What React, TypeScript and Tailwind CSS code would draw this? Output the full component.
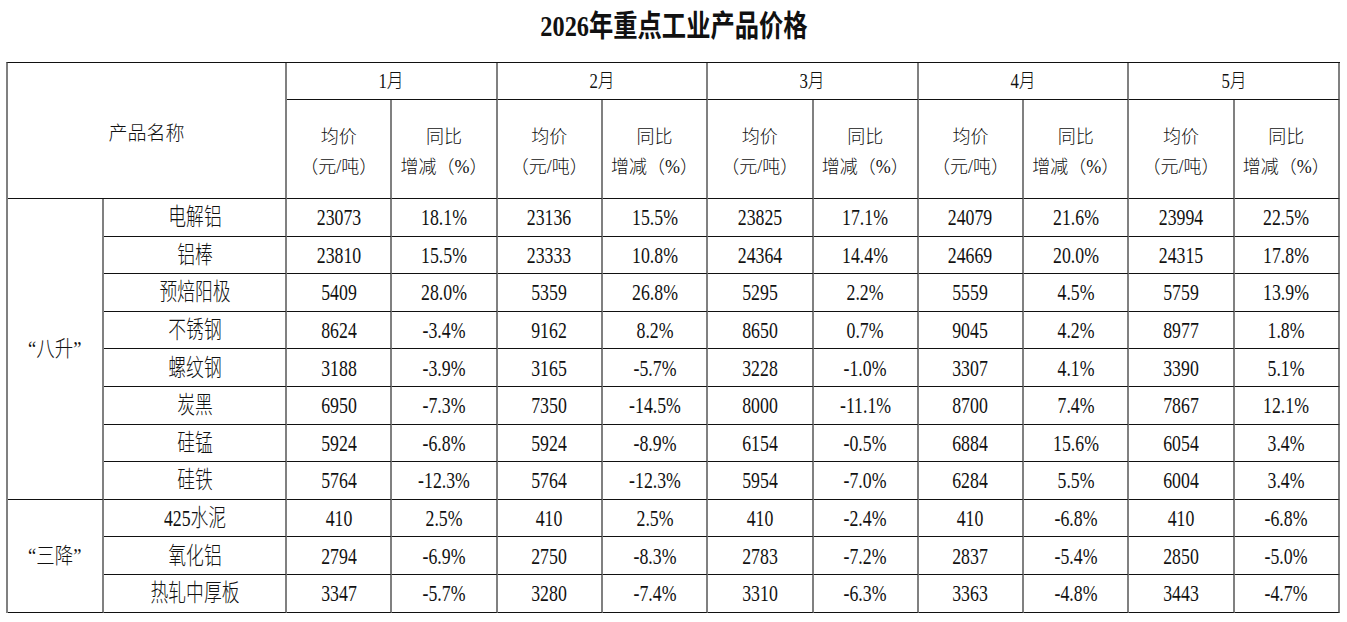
import React from "react";

const rows: [string, string[]][] = [
  ["电解铝", ["23073", "18.1%", "23136", "15.5%", "23825", "17.1%", "24079", "21.6%", "23994", "22.5%"]],
  ["铝棒", ["23810", "15.5%", "23333", "10.8%", "24364", "14.4%", "24669", "20.0%", "24315", "17.8%"]],
  ["预焙阳极", ["5409", "28.0%", "5359", "26.8%", "5295", "2.2%", "5559", "4.5%", "5759", "13.9%"]],
  ["不锈钢", ["8624", "-3.4%", "9162", "8.2%", "8650", "0.7%", "9045", "4.2%", "8977", "1.8%"]],
  ["螺纹钢", ["3188", "-3.9%", "3165", "-5.7%", "3228", "-1.0%", "3307", "4.1%", "3390", "5.1%"]],
  ["炭黑", ["6950", "-7.3%", "7350", "-14.5%", "8000", "-11.1%", "8700", "7.4%", "7867", "12.1%"]],
  ["硅锰", ["5924", "-6.8%", "5924", "-8.9%", "6154", "-0.5%", "6884", "15.6%", "6054", "3.4%"]],
  ["硅铁", ["5764", "-12.3%", "5764", "-12.3%", "5954", "-7.0%", "6284", "5.5%", "6004", "3.4%"]],
  ["425水泥", ["410", "2.5%", "410", "2.5%", "410", "-2.4%", "410", "-6.8%", "410", "-6.8%"]],
  ["氧化铝", ["2794", "-6.9%", "2750", "-8.3%", "2783", "-7.2%", "2837", "-5.4%", "2850", "-5.0%"]],
  ["热轧中厚板", ["3347", "-5.7%", "3280", "-7.4%", "3310", "-6.3%", "3363", "-4.8%", "3443", "-4.7%"]],
];

const months = ["1月", "2月", "3月", "4月", "5月"];

const cell =
  "flex items-center justify-center border-r-2 border-r-[#808080] border-b border-b-[#111]";

function Data({ children }: { children: React.ReactNode }) {
  return (
    <div className={cell}>
      <span className="inline-block scale-x-[0.74] whitespace-nowrap text-[24px] leading-[30px]">
        {children}
      </span>
    </div>
  );
}

export default function App() {
  return (
    <div className="w-[1347px] h-[622px] bg-white text-[#111] font-light font-['Liberation_Serif','Noto_Sans_CJK_SC',serif] overflow-hidden">
      <div className="h-[62px] pt-[11px] flex justify-center">
        <span className="inline-block scale-x-[0.81] font-bold text-[30px] leading-[30px] whitespace-nowrap">
          2026年重点工业产品价格
        </span>
      </div>
      <div className="ml-[6px] w-[1334px] grid grid-cols-[96px_183px_repeat(10,1fr)] grid-rows-[37px_99px_repeat(11,37.6px)] border-l-2 border-l-[#808080] border-t border-t-[#111]">
        <div className={`${cell} col-span-2 row-span-2 pt-[7px]`}>
          <span className="inline-block text-[19px] leading-[30px]">产品名称</span>
        </div>
        {months.map((m) => (
          <div key={m} className={`${cell} col-span-2`}>
            <span className="inline-block scale-x-[0.84] text-[20px] leading-[30px]">{m}</span>
          </div>
        ))}
        {months.map((m) => (
          <React.Fragment key={m + "h"}>
            <div className={`${cell} pt-[6px]`}>
              <span className="inline-block text-center text-[18px] leading-[30px] whitespace-nowrap">
                <span className="block">均价</span>
                <span className="block">（元/吨）</span>
              </span>
            </div>
            <div className={`${cell} pt-[6px]`}>
              <span className="inline-block text-center text-[18px] leading-[30px] whitespace-nowrap">
                <span className="block">同比</span>
                <span className="block">增减（%）</span>
              </span>
            </div>
          </React.Fragment>
        ))}
        {rows.map(([name, vals], i) => (
          <React.Fragment key={name}>
            {i === 0 && (
              <div className={`${cell} row-span-8`}>
                <span className="inline-block scale-x-[0.84] text-[22px] leading-[30px] whitespace-nowrap">“八升”</span>
              </div>
            )}
            {i === 8 && (
              <div className={`${cell} row-span-3`}>
                <span className="inline-block scale-x-[0.84] text-[22px] leading-[30px] whitespace-nowrap">“三降”</span>
              </div>
            )}
            <Data>{name}</Data>
            {vals.map((v, j) => (
              <Data key={j}>{v}</Data>
            ))}
          </React.Fragment>
        ))}
      </div>
    </div>
  );
}
